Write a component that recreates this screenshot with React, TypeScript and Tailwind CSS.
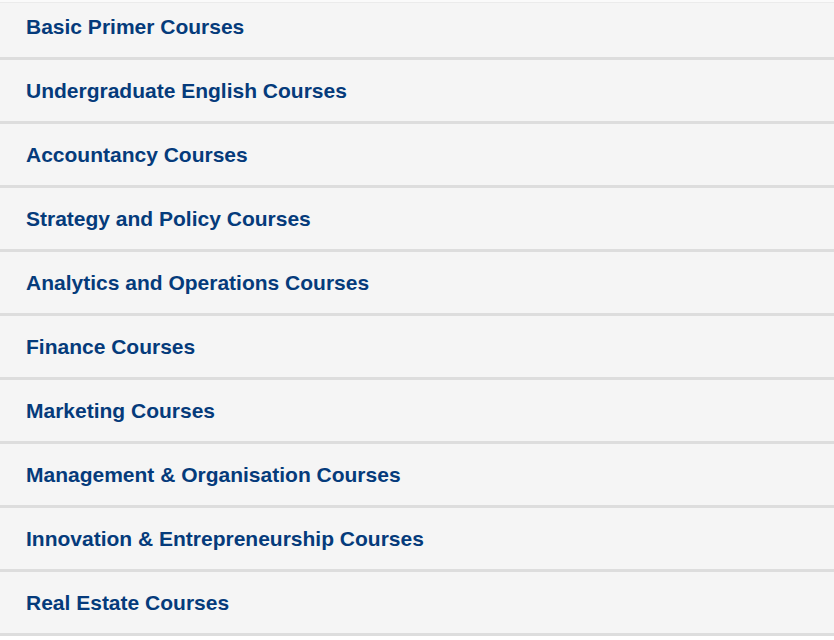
const courses = [
  "Basic Primer Courses",
  "Undergraduate English Courses",
  "Accountancy Courses",
  "Strategy and Policy Courses",
  "Analytics and Operations Courses",
  "Finance Courses",
  "Marketing Courses",
  "Management & Organisation Courses",
  "Innovation & Entrepreneurship Courses",
  "Real Estate Courses",
]

export default function App() {
  return (
    <div className="min-h-[640px] bg-white font-['Liberation_Sans',Arial,sans-serif] overflow-hidden">
      <div className="h-[2px] bg-[#fafafa]" />
      <div className="h-[1px] bg-[#ebebeb]" />
      <ul>
        {courses.map((name, i) => (
          <li key={name} className="border-b-[3px] border-[#dddddd] bg-[#f5f5f5]">
            <a
              href="#"
              className={`flex items-center px-[26px] text-[21px] font-bold text-[#053b7b] ${
                i === 0 ? "h-[54px] pb-[7px]" : "h-[61px]"
              }`}
            >
              {name}
            </a>
          </li>
        ))}
      </ul>
    </div>
  )
}
